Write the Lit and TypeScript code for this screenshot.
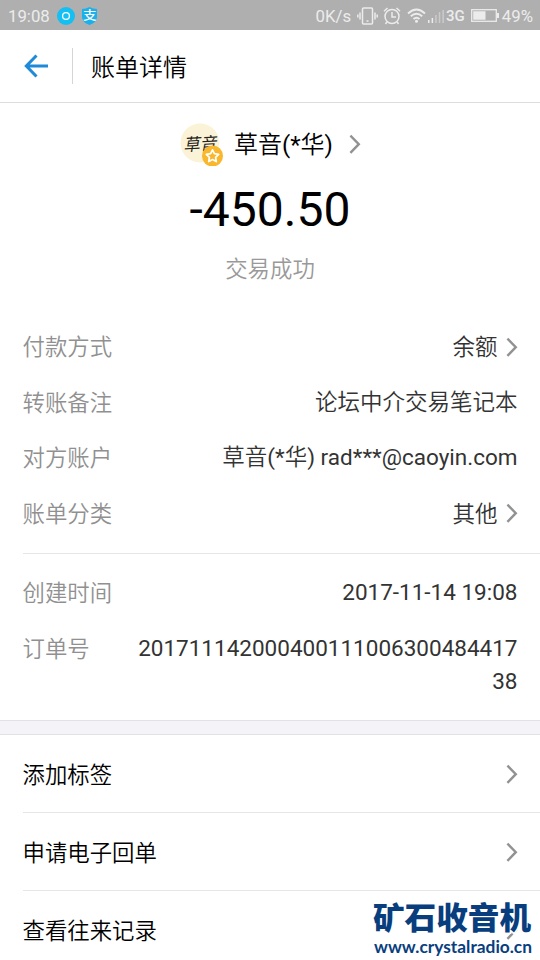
import { LitElement, html, css, svg, nothing } from "lit";
import { customElement, property } from "lit/decorators.js";

@customElement("chevron-icon")
class ChevronIcon extends LitElement {
  static styles = css`
    :host { display: block; width: 12px; height: 20px; flex: none; }
    svg { display: block; }
    path { fill: none; stroke: #929292; stroke-width: 2.4; }
  `;
  render() {
    return html`<svg width="12" height="20" viewBox="0 0 12 20"><path d="M1.4 1.6 9.800 10.200 1.4 18.800" /></svg>`;
  }
}

@customElement("detail-row")
class DetailRow extends LitElement {
  @property() label = "";
  @property() value = "";
  @property({ type: Boolean }) link = false;
  static styles = css`
    :host { display: flex; justify-content: space-between; align-items: flex-start; padding: 0 22.5px; line-height: 33px; }
    .label { color: #909090; flex: none; padding-top: 1px; margin-bottom: -1px; }
    .side { display: flex; align-items: center; gap: 8px; color: #333; }
    .value { font-size: 22.5px; min-width: 385px; max-width: 385px; text-align: right; overflow-wrap: anywhere; }
    .link .value { min-width: 0; white-space: nowrap; padding-top: 1px; margin-bottom: -1px; }
  `;
  render() {
    return html`
      <span class="label">${this.label}</span>
      <div class="side ${this.link ? "link" : ""}">
        <span class="value">${this.value}</span>
        ${this.link ? html`<chevron-icon></chevron-icon>` : nothing}
      </div>`;
  }
}

const signalBars = [3, 5, 8, 11, 13];

@customElement("app-root")
class AppRoot extends LitElement {
  static styles = css`
    :host {
      display: block; position: relative; width: 540px; height: 960px; overflow: hidden; background: #fff;
      font-family: Roboto, "Noto Sans CJK SC DemiLight", "Noto Sans CJK SC Light", "Noto Sans CJK SC", sans-serif; font-size: 22.4px; color: #000;
    }
    * { box-sizing: border-box; }
    svg { display: block; flex: none; }
    .status { height: 30px; background: #afafaf; color: #ececec; display: flex; align-items: center; padding: 1px 7px 0 8px; font-size: 16.8px; }
    .status .clock { width: 49px; }
    .status .shield { margin-left: 5px; }
    .speed { margin-left: auto; }
    .vibrate { margin-left: 6px; }
    .alarm { margin-left: 5px; }
    .wifi { margin-left: 6px; }
    .signal { margin-left: 2px; }
    .net { font-size: 15px; font-weight: 500; margin-left: 2px; }
    .battery { margin: 0 3px 0 6px; }
    .header { height: 73px; border-bottom: 1px solid #dedee0; display: flex; align-items: center; padding-left: 24px; }
    .sep { width: 1px; height: 36px; background: #d5d5d5; margin: 0 18px 0 23px; }
    .title { font-size: 24px; line-height: 36px; padding-top: 3px; }
    .payee { display: flex; align-items: center; height: 42px; margin-top: 20px; padding-left: 180px; }
    .payee .name { font-size: 24px; line-height: 36px; width: 100px; margin-left: 9px; white-space: nowrap; padding-top: 1px; }
    .payee chevron-icon { margin-left: 15px; }
    .amount { font-size: 48px; line-height: 60px; text-align: center; margin-top: 15px; white-space: nowrap; }
    .state { color: #999; text-align: center; line-height: 33px; margin-top: 13px; }
    .details { display: flex; flex-direction: column; gap: 22.6px; margin-top: 44px; }
    .rule { height: 1px; background: #e6e6e8; margin-left: 22.5px; }
    .first { margin-bottom: 23.3px; }
    .second { margin-top: 22px; }
    .band { height: 15px; background: #f4f4f8; border-top: 1px solid #e2e2e6; border-bottom: 1px solid #e2e2e6; margin-top: 22.6px; }
    .item { height: 77px; display: flex; align-items: center; justify-content: space-between; padding: 0 22.5px; line-height: 33px; }
    .item span { padding-top: 3px; }
    .mark { position: absolute; right: 0; bottom: 0; width: 172px; height: 70px; }
    .mark text { fill: #083e7e; stroke: #fff; stroke-width: 3px; paint-order: stroke; }
    .brand { font: 900 31px "Noto Sans CJK SC", sans-serif; }
    .site { font: 700 17.5px Lato, sans-serif; }
    .script { font: italic 400 17px "Noto Sans CJK SC", sans-serif; fill: #25231c; }
    .shield text { font: 500 12px "Noto Sans CJK SC", sans-serif; fill: #fff; }
  `;

  statusBar() {
    return html`<div class="status">
      <span class="clock">19:08</span>
      <svg width="18" height="18" viewBox="0 0 18 18"><circle cx="9" cy="9" r="9" fill="#14bff3" /><circle cx="9" cy="9" r="3.4" fill="none" stroke="#fff" stroke-width="1.3" /></svg>
      <svg class="shield" width="19" height="18" viewBox="0 0 19 18"><path d="M2 2Q6 2 9.500 0 13 2 17 2V10Q17 15 9.500 18 2 15 2 10Z" fill="#18b1ee" /><text x="3" y="12.500" textLength="13.500" lengthAdjust="spacingAndGlyphs">支</text></svg>
      <span class="speed">0K/s</span>
      <svg class="vibrate" width="21" height="18" viewBox="0 0 21 18" fill="none" stroke="#ececec" stroke-width="1.500"><rect x="5.500" y="1" width="10" height="16" rx="1" /><path d="M3 5.500V12.500M.8 7.500V10.500M18 5.500V12.500M20.200 7.500V10.500M9.500 14H11.500" /></svg>
      <svg class="alarm" width="18" height="18" viewBox="0 0 18 18" fill="none" stroke="#ececec" stroke-width="1.500"><circle cx="9" cy="9.500" r="7" /><path d="M9 5V10H13M1 4.200 4.500 1M17 4.200 13.500 1M3.800 15 2.500 17M14.200 15 15.500 17" /></svg>
      <svg class="wifi" width="19" height="15" viewBox="0 0 19 15" fill="none" stroke="#ececec" stroke-width="1.900"><path d="M1 5.500Q9.500-2.500 18 5.500M3.800 8.300Q9.500 3 15.200 8.300M6.500 11Q9.500 8.300 12.500 11" /><circle cx="9.500" cy="13.200" r="1.500" fill="#ececec" stroke="none" /></svg>
      <svg class="signal" width="16" height="14" viewBox="0 0 16 14">${signalBars.map((h, i) => svg`<rect x=${i * 3.6} y=${14 - h} width="1.500" height=${h} fill=${i < 2 ? "#ececec" : "#cbcbcb"} />`)}</svg>
      <span class="net">3G</span>
      <svg class="battery" width="28" height="13" viewBox="0 0 28 13"><rect x=".7" y=".7" width="24.600" height="11.600" fill="none" stroke="#ececec" stroke-width="1.300" /><path d="M2.200 2.200H14.500V10.800H2.200ZM26 4H28V9H26Z" fill="#ececec" /></svg>
      <span>49%</span>
    </div>`;
  }

  render() {
    return html`
      ${this.statusBar()}
      <div class="header">
        <svg width="25" height="24" viewBox="0 0 25 24" fill="none" stroke="#1f8ad8" stroke-width="3"><path d="M24 12H2.500M12.500 1.500 2.300 12 12.500 22.500" /></svg>
        <div class="sep"></div>
        <span class="title">账单详情</span>
      </div>
      <div class="payee">
        <svg width="45" height="44" viewBox="0 0 45 44">
          <circle cx="20" cy="21" r="19.500" fill="#fbf3d7" />
          <text class="script" x="3" y="28" textLength="33" lengthAdjust="spacingAndGlyphs" transform="rotate(-3 20 20)">草音</text>
          <circle cx="32.500" cy="34" r="10.500" fill="#f8b72d" />
          <path d="M32.500 27.800 34.400 31.700 38.700 32.300 35.600 35.300 36.300 39.600 32.500 37.600 28.700 39.600 29.400 35.300 26.300 32.300 30.600 31.700Z" fill="none" stroke="#fff" stroke-width="1.700" stroke-linejoin="round" />
        </svg>
        <span class="name">草音(*华)</span>
        <chevron-icon></chevron-icon>
      </div>
      <div class="amount">-450.50</div>
      <div class="state">交易成功</div>
      <div class="details first">
        <detail-row label="付款方式" value="余额" link></detail-row>
        <detail-row label="转账备注" value="论坛中介交易笔记本"></detail-row>
        <detail-row label="对方账户" value="草音(*华) rad***@caoyin.com"></detail-row>
        <detail-row label="账单分类" value="其他" link></detail-row>
      </div>
      <div class="rule"></div>
      <div class="details second">
        <detail-row label="创建时间" value="2017-11-14 19:08"></detail-row>
        <detail-row label="订单号" value="20171114200040011100630048441738"></detail-row>
      </div>
      <div class="band"></div>
      <div class="item"><span>添加标签</span><chevron-icon></chevron-icon></div>
      <div class="rule"></div>
      <div class="item"><span>申请电子回单</span><chevron-icon></chevron-icon></div>
      <div class="rule"></div>
      <div class="item"><span>查看往来记录</span><chevron-icon></chevron-icon></div>
      <svg class="mark" viewBox="0 0 172 70">
        <text class="brand" x="5" y="39" textLength="158" lengthAdjust="spacingAndGlyphs">矿石收音机</text>
        <text class="site" x="6" y="63" textLength="158" lengthAdjust="spacingAndGlyphs">www.crystalradio.cn</text>
      </svg>`;
  }
}
